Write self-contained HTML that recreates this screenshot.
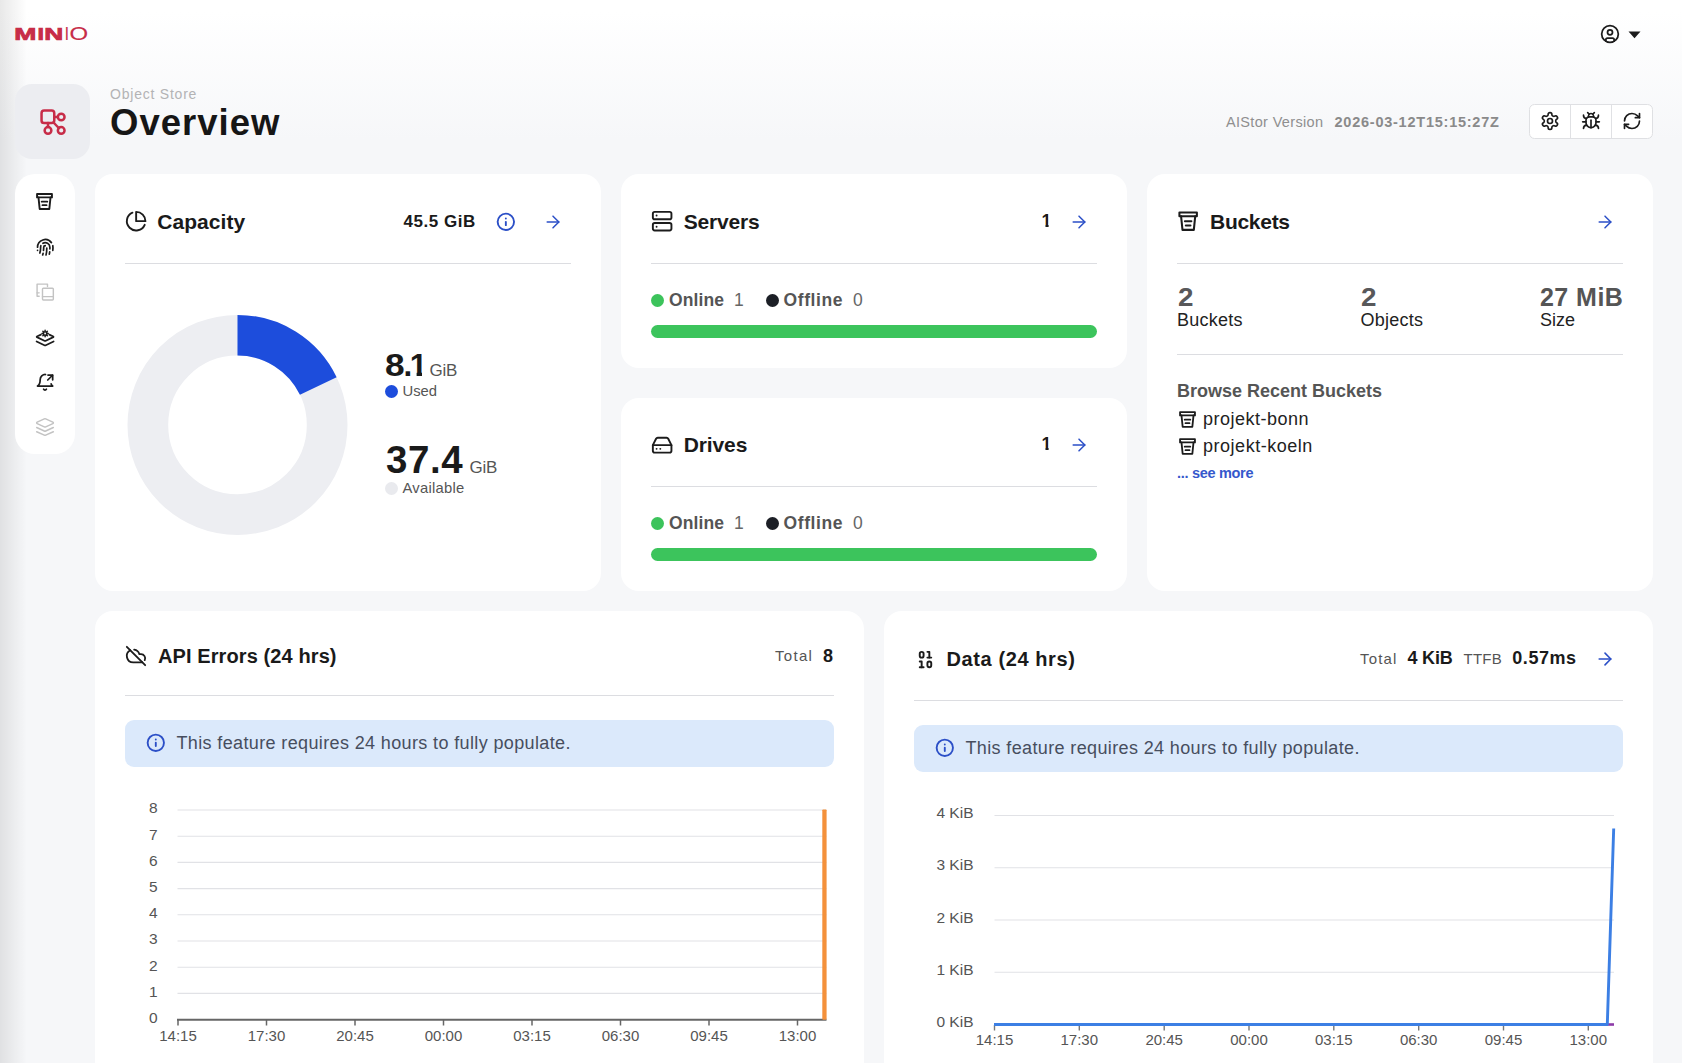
<!DOCTYPE html>
<html lang="en"><head><meta charset="utf-8"><title>AIStor Console - Overview</title>
<style>
html,body{margin:0;padding:0}
body{width:1682px;height:1063px;overflow:hidden;position:relative;font-family:"Liberation Sans",Arial,sans-serif;background:linear-gradient(180deg,#ffffff 0px,#ffffff 12px,#f6f7f9 140px,#f6f7f9 100%)}
.t{position:absolute;white-space:pre;margin:0}
.i{position:absolute;overflow:visible}
.card{position:absolute;background:#fff;border-radius:18px}
.hr{position:absolute;height:1px;background:#dcdde1}
.dot{position:absolute;border-radius:50%}
.bar{position:absolute;height:13px;border-radius:6.5px;background:#3cc45c}
.banner{position:absolute;background:#dbe9fb;border-radius:9px}
.edge{position:absolute;left:0;top:0;width:27px;height:1063px;background:linear-gradient(90deg,rgba(0,0,0,0.09) 0,rgba(0,0,0,0) 27px)}
</style></head><body>
<div class="edge"></div>
<svg class="i" style="left:0;top:0" width="120" height="60" viewBox="0 0 120 60"><text y="39.6" font-family="Liberation Sans, Arial, sans-serif" font-size="16.5" fill="#c72c48" stroke="#c72c48" stroke-linejoin="miter"><tspan x="14.3" font-weight="700" stroke-width="0.7" textLength="22.1" lengthAdjust="spacingAndGlyphs">M</tspan><tspan x="37.4" font-weight="700" stroke-width="0.7" textLength="6.5" lengthAdjust="spacingAndGlyphs">I</tspan><tspan x="44.35" font-weight="700" stroke-width="0.7" textLength="19" lengthAdjust="spacingAndGlyphs">N</tspan><tspan x="64.8" font-size="17.5" font-weight="400" stroke-width="0.15" textLength="4.2" lengthAdjust="spacingAndGlyphs">I</tspan><tspan x="69.6" font-size="17.5" font-weight="400" stroke-width="0.15" textLength="18.6" lengthAdjust="spacingAndGlyphs">O</tspan></text></svg>
<svg class="i" style="left:1600.2px;top:24.4px" width="20" height="20" viewBox="0 0 24 24" fill="none" stroke="#1c1c1c" stroke-width="2.1" stroke-linecap="round" stroke-linejoin="round" ><circle cx="12" cy="12" r="10"/><circle cx="12" cy="10" r="3"/><path d="M7 20.662V19a2 2 0 0 1 2-2h6a2 2 0 0 1 2 2v1.662"/></svg>
<svg class="i" style="left:1628.3px;top:30.6px" width="13" height="8" viewBox="0 0 13 8"><path d="M0.5 0.5h12L6.5 7.2z" fill="#1c1c1c"/></svg>
<div style="position:absolute;left:15px;top:84px;width:75px;height:75px;border-radius:17px;background:#ecedf1"></div>
<svg class="i" style="left:40px;top:109px" width="26" height="26" viewBox="0 0 26 26" fill="none" stroke="#c72c48" stroke-width="2.5" stroke-linecap="round" stroke-linejoin="round" ><rect x="1.55" y="1.55" width="12.7" height="12.5" rx="2.6"/><circle cx="21.2" cy="8" r="3.35"/><circle cx="8" cy="21.4" r="3.35"/><circle cx="21.2" cy="21.4" r="3.35"/><path d="M14.25 8h3.5"/><path d="M8 14.05v4"/><path d="m13.5 13.5 5.3 5.5"/></svg>
<div class="t" style="left:110px;top:86px;font-size:14px;line-height:16px;font-weight:400;color:#b3b3b5;letter-spacing:0.78px;">Object Store</div>
<div class="t" style="left:110px;top:102px;font-size:36.5px;line-height:41px;font-weight:700;color:#161616;letter-spacing:1px;">Overview</div>
<div class="t" style="left:1226px;top:114px;font-size:14.5px;line-height:16px;font-weight:400;color:#8f8f8f;letter-spacing:0.33px;">AIStor Version</div>
<div class="t" style="left:1334.5px;top:114px;font-size:14.5px;line-height:16px;font-weight:700;color:#8a8a8a;letter-spacing:0.76px;">2026-03-12T15:15:27Z</div>
<div style="position:absolute;left:1529px;top:104px;width:122px;height:33px;border:1px solid #dfe0e3;border-radius:5.5px;background:#fff"></div>
<div style="position:absolute;left:1570px;top:105px;width:1px;height:33px;background:#e0e1e4"></div><div style="position:absolute;left:1611px;top:105px;width:1px;height:33px;background:#e0e1e4"></div>
<svg class="i" style="left:1540px;top:111px" width="20" height="20" viewBox="0 0 24 24" fill="none" stroke="#1c1c1c" stroke-width="2" stroke-linecap="round" stroke-linejoin="round" ><path d="M12.22 2h-.44a2 2 0 0 0-2 2v.18a2 2 0 0 1-1 1.73l-.43.25a2 2 0 0 1-2 0l-.15-.08a2 2 0 0 0-2.73.73l-.22.38a2 2 0 0 0 .73 2.73l.15.1a2 2 0 0 1 1 1.72v.51a2 2 0 0 1-1 1.74l-.15.09a2 2 0 0 0-.73 2.73l.22.38a2 2 0 0 0 2.73.73l.15-.08a2 2 0 0 1 2 0l.43.25a2 2 0 0 1 1 1.73V20a2 2 0 0 0 2 2h.44a2 2 0 0 0 2-2v-.18a2 2 0 0 1 1-1.73l.43-.25a2 2 0 0 1 2 0l.15.08a2 2 0 0 0 2.73-.73l.22-.39a2 2 0 0 0-.73-2.73l-.15-.08a2 2 0 0 1-1-1.74v-.5a2 2 0 0 1 1-1.74l.15-.09a2 2 0 0 0 .73-2.73l-.22-.38a2 2 0 0 0-2.73-.73l-.15.08a2 2 0 0 1-2 0l-.43-.25a2 2 0 0 1-1-1.73V4a2 2 0 0 0-2-2z"/><circle cx="12" cy="12" r="3"/></svg>
<svg class="i" style="left:1581px;top:111px" width="20" height="20" viewBox="0 0 24 24" fill="none" stroke="#1c1c1c" stroke-width="2" stroke-linecap="round" stroke-linejoin="round" ><path d="m8 2 1.88 1.88"/><path d="M14.12 3.88 16 2"/><path d="M9 7.13v-1a3.003 3.003 0 1 1 6 0v1"/><path d="M12 20c-3.3 0-6-2.7-6-6v-3a4 4 0 0 1 4-4h4a4 4 0 0 1 4 4v3c0 3.3-2.7 6-6 6"/><path d="M12 20v-9"/><path d="M6.53 9C4.6 8.8 3 7.1 3 5"/><path d="M6 13H2"/><path d="M3 21c0-2.1 1.7-3.9 3.8-4"/><path d="M20.97 5c0 2.1-1.6 3.8-3.5 4"/><path d="M22 13h-4"/><path d="M17.2 17c2.1.1 3.8 1.9 3.8 4"/></svg>
<svg class="i" style="left:1622px;top:111px" width="20" height="20" viewBox="0 0 24 24" fill="none" stroke="#1c1c1c" stroke-width="2" stroke-linecap="round" stroke-linejoin="round" ><path d="M3 12a9 9 0 0 1 9-9 9.75 9.75 0 0 1 6.74 2.74L21 8"/><path d="M21 3v5h-5"/><path d="M21 12a9 9 0 0 1-9 9 9.75 9.75 0 0 1-6.74-2.74L3 16"/><path d="M8 16H3v5"/></svg>
<div class="card" style="left:15px;top:174px;width:60px;height:280px;border-radius:20px"></div>
<svg class="i" style="left:35.3px;top:192.1px" width="19" height="19" viewBox="0 0 24 24" fill="none" stroke="#1c1c1c" stroke-width="2.4" stroke-linecap="round" stroke-linejoin="round" ><path d="M2.6 2.6h18.8v4.2H2.6z"/><path d="M4.4 6.8 5.9 21.4h12.2l1.5-14.6"/><path d="M8.5 12.2h7"/><path d="M9.5 16.6h5"/></svg>
<svg class="i" style="left:35.5px;top:237.5px" width="18.5" height="18.5" viewBox="0 0 24 24" fill="none" stroke="#1c1c1c" stroke-width="2.2" stroke-linecap="round" stroke-linejoin="round" ><path d="M12 10a2 2 0 0 0-2 2c0 1.02-.1 2.51-.26 4"/><path d="M14 13.12c0 2.38 0 6.38-1 8.88"/><path d="M17.29 21.02c.12-.6.43-2.3.5-3.02"/><path d="M2 12a10 10 0 0 1 18-6"/><path d="M2 16h.01"/><path d="M21.8 16c.2-2 .131-5.354 0-6"/><path d="M5 19.5C5.5 18 6 15 6 12a6 6 0 0 1 .34-2"/><path d="M8.65 22c.21-.66.45-1.32.57-2"/><path d="M9 6.8a6 6 0 0 1 9 5.2v2"/></svg>
<svg class="i" style="left:35px;top:282px" width="20" height="20" viewBox="0 0 24 24" fill="none" stroke="#c3c3c3" stroke-width="1.7" stroke-linecap="round" stroke-linejoin="round" ><rect width="13" height="14" x="9" y="7.5" rx="1"/><path d="M9 17.5h13"/><path d="M5 17H2.5V2.5h12.5v3"/><path d="M2.5 13h2.5"/></svg>
<svg class="i" style="left:35px;top:326px" width="20" height="20" viewBox="0 0 20 20" fill="none" stroke="#1c1c1c" stroke-width="1.75" stroke-linecap="round" stroke-linejoin="round" ><path d="M5.9 8.6 1.9 10.45a.4.4 0 0 0 0 .7l7.5 3.65a1.6 1.6 0 0 0 1.4 0l7.5-3.65a.4.4 0 0 0 0-.7L14.3 8.6"/><path d="m1.6 15.5 7.8 3.8a1.6 1.6 0 0 0 1.4 0l7.8-3.8"/><circle cx="10.1" cy="7.5" r="1.75" stroke-width="1.7"/><path stroke-width="1.5" d="M12.5 7.5L13.25 7.5M11.8 9.2L12.33 9.73M10.1 9.9L10.1 10.65M8.4 9.2L7.87 9.73M7.7 7.5L6.95 7.5M8.4 5.8L7.87 5.27M10.1 5.1L10.1 4.35M11.8 5.8L12.33 5.27"/></svg>
<svg class="i" style="left:35px;top:372px" width="20" height="20" viewBox="0 0 24 24" fill="none" stroke="#1c1c1c" stroke-width="2.1" stroke-linecap="round" stroke-linejoin="round" ><path d="M10.3 20.6a1.94 1.94 0 0 0 3.4 0"/><path d="M12.6 3A6.2 6.2 0 0 0 6.2 9.2c0 4.8-1.3 6.6-3.2 7.6h18.2c-.8-.5-1.4-1.3-1.8-2.5"/><path d="M15.6 3.7h5.6v5.6"/><path d="m21 3.9-5.7 5.7"/></svg>
<svg class="i" style="left:35px;top:416.5px" width="20" height="20" viewBox="0 0 24 24" fill="none" stroke="#c3c3c3" stroke-width="1.8" stroke-linecap="round" stroke-linejoin="round" ><path d="m12.83 2.18a2 2 0 0 0-1.66 0L2.6 6.08a1 1 0 0 0 0 1.83l8.58 3.91a2 2 0 0 0 1.66 0l8.58-3.9a1 1 0 0 0 0-1.83Z"/><path d="m22 17.65-9.17 4.16a2 2 0 0 1-1.66 0L2 17.65"/><path d="m22 12.65-9.17 4.16a2 2 0 0 1-1.66 0L2 12.65"/></svg>
<div class="card" style="left:95px;top:174px;width:506px;height:417px"></div>
<div class="card" style="left:621px;top:174px;width:506px;height:194px"></div>
<div class="card" style="left:621px;top:398px;width:506px;height:193px"></div>
<div class="card" style="left:1147px;top:174px;width:506px;height:417px"></div>
<svg class="i" style="left:125.05px;top:210.15px" width="22.3" height="22.3" viewBox="0 0 24 24" fill="none" stroke="#1c1c1c" stroke-width="2.05" stroke-linecap="round" stroke-linejoin="round" ><path d="M21.21 15.89A10 10 0 1 1 8 2.83"/><path d="M22 12A10 10 0 0 0 12 2v10z"/></svg>
<div class="t" style="left:157.3px;top:210px;font-size:21px;line-height:23px;font-weight:700;color:#1a1a1a;letter-spacing:0.05px;">Capacity</div>
<div class="t" style="left:403.5px;top:212px;font-size:17px;line-height:19px;font-weight:700;color:#1a1a1a;letter-spacing:0.55px;">45.5 GiB</div>
<svg class="i" style="left:496.05px;top:212.05px" width="19.7" height="19.7" viewBox="0 0 24 24" fill="none" stroke="#2b4fc7" stroke-width="2.3" stroke-linecap="round" stroke-linejoin="round" ><circle cx="12" cy="12" r="10"/><path d="M12 16v-4"/><path d="M12 8h.01"/></svg>
<svg class="i" style="left:543px;top:212px" width="20" height="20" viewBox="0 0 24 24" fill="none" stroke="#2b4fc7" stroke-width="1.8" stroke-linecap="round" stroke-linejoin="round" ><path d="M5 12h14"/><path d="m12 5 7 7-7 7"/></svg>
<div class="hr" style="left:125px;top:263px;width:446px"></div>
<svg class="i" style="left:0;top:0" width="620" height="600" viewBox="0 0 620 600"><circle cx="237.5" cy="424.9" r="89.65" fill="none" stroke="#edeef2" stroke-width="40.7"/><path d="M237.5 335.25A89.65 89.65 0 0 1 318.28 386.02" fill="none" stroke="#1d4ddc" stroke-width="40.7"/></svg>
<div class="t" style="left:385.1px;top:347px;font-size:31.5px;line-height:36px;font-weight:700;color:#1a1a1a;transform:scaleX(1.12);transform-origin:0 0;">8</div>
<div class="t" style="left:403.6px;top:347px;font-size:31.5px;line-height:36px;font-weight:700;color:#1a1a1a;">.</div>
<div class="t" style="left:409.8px;top:347px;font-size:31.5px;line-height:36px;font-weight:700;color:#1a1a1a;clip-path:polygon(0 0,12.2px 0,12.2px 40px,6.8px 40px,6.8px 25px,0 25px);">1</div>
<div class="t" style="left:429.5px;top:361px;font-size:17px;line-height:19px;font-weight:400;color:#555;letter-spacing:-0.3px;">GiB</div>
<div class="dot" style="left:385px;top:384.5px;width:13px;height:13px;background:#1d4ddc"></div>
<div class="t" style="left:402.5px;top:383px;font-size:14.8px;line-height:16px;font-weight:400;color:#555;">Used</div>
<div class="t" style="left:386px;top:438px;font-size:38.5px;line-height:43px;font-weight:700;color:#1a1a1a;letter-spacing:0.55px;">37.4</div>
<div class="t" style="left:469.5px;top:458px;font-size:17px;line-height:19px;font-weight:400;color:#555;letter-spacing:-0.3px;">GiB</div>
<div class="dot" style="left:385px;top:482px;width:13px;height:13px;background:#e9eaee"></div>
<div class="t" style="left:402.5px;top:480px;font-size:14.8px;line-height:16px;font-weight:400;color:#555;letter-spacing:0.25px;">Available</div>
<svg class="i" style="left:651.05px;top:210.2px" width="22.3" height="22.3" viewBox="0 0 24 24" fill="none" stroke="#1c1c1c" stroke-width="2.05" stroke-linecap="round" stroke-linejoin="round" ><rect width="20" height="8" x="2" y="2" rx="2" ry="2"/><rect width="20" height="8" x="2" y="14" rx="2" ry="2"/><path d="M6 6h.01"/><path d="M6 18h.01"/></svg>
<div class="t" style="left:683.8px;top:210px;font-size:21px;line-height:23px;font-weight:700;color:#1a1a1a;letter-spacing:-0.2px;">Servers</div>
<div class="t" style="left:1041.6px;top:211px;font-size:18px;line-height:20px;font-weight:700;color:#1a1a1a;clip-path:polygon(0 0,7px 0,7px 24px,3.9px 24px,3.9px 14px,0 14px);">1</div>
<svg class="i" style="left:1069px;top:212px" width="20" height="20" viewBox="0 0 24 24" fill="none" stroke="#2b4fc7" stroke-width="1.8" stroke-linecap="round" stroke-linejoin="round" ><path d="M5 12h14"/><path d="m12 5 7 7-7 7"/></svg>
<div class="hr" style="left:651px;top:263px;width:446px"></div>
<div class="dot" style="left:651px;top:294px;width:13px;height:13px;background:#3cc35b"></div>
<div class="t" style="left:669px;top:290px;font-size:17.5px;line-height:20px;font-weight:700;color:#555;letter-spacing:0.1px;">Online</div>
<div class="t" style="left:734px;top:290px;font-size:17.5px;line-height:20px;font-weight:400;color:#666;">1</div>
<div class="dot" style="left:765.5px;top:294px;width:13px;height:13px;background:#1c1f26"></div>
<div class="t" style="left:783.5px;top:290px;font-size:17.5px;line-height:20px;font-weight:700;color:#555;letter-spacing:0.6px;">Offline</div>
<div class="t" style="left:853px;top:290px;font-size:17.5px;line-height:20px;font-weight:400;color:#666;">0</div>
<div class="bar" style="left:651px;top:325px;width:446px"></div>
<svg class="i" style="left:651.05px;top:433.5px" width="22.3" height="22.3" viewBox="0 0 24 24" fill="none" stroke="#1c1c1c" stroke-width="2.05" stroke-linecap="round" stroke-linejoin="round" ><path d="M22 12H2"/><path d="M5.45 5.11 2 12v6a2 2 0 0 0 2 2h16a2 2 0 0 0 2-2v-6l-3.45-6.89A2 2 0 0 0 16.76 4H7.24a2 2 0 0 0-1.79 1.11z"/><path d="M6 16h.01"/><path d="M10 16h.01"/></svg>
<div class="t" style="left:683.8px;top:433px;font-size:21px;line-height:23px;font-weight:700;color:#1a1a1a;letter-spacing:-0.14px;">Drives</div>
<div class="t" style="left:1041.6px;top:434px;font-size:18px;line-height:20px;font-weight:700;color:#1a1a1a;clip-path:polygon(0 0,7px 0,7px 24px,3.9px 24px,3.9px 14px,0 14px);">1</div>
<svg class="i" style="left:1069px;top:435px" width="20" height="20" viewBox="0 0 24 24" fill="none" stroke="#2b4fc7" stroke-width="1.8" stroke-linecap="round" stroke-linejoin="round" ><path d="M5 12h14"/><path d="m12 5 7 7-7 7"/></svg>
<div class="hr" style="left:651px;top:486px;width:446px"></div>
<div class="dot" style="left:651px;top:517px;width:13px;height:13px;background:#3cc35b"></div>
<div class="t" style="left:669px;top:513px;font-size:17.5px;line-height:20px;font-weight:700;color:#555;letter-spacing:0.1px;">Online</div>
<div class="t" style="left:734px;top:513px;font-size:17.5px;line-height:20px;font-weight:400;color:#666;">1</div>
<div class="dot" style="left:765.5px;top:517px;width:13px;height:13px;background:#1c1f26"></div>
<div class="t" style="left:783.5px;top:513px;font-size:17.5px;line-height:20px;font-weight:700;color:#555;letter-spacing:0.6px;">Offline</div>
<div class="t" style="left:853px;top:513px;font-size:17.5px;line-height:20px;font-weight:400;color:#666;">0</div>
<div class="bar" style="left:651px;top:548px;width:446px"></div>
<svg class="i" style="left:1176.8px;top:210.3px" width="22.3" height="22.3" viewBox="0 0 24 24" fill="none" stroke="#1c1c1c" stroke-width="2.2" stroke-linecap="round" stroke-linejoin="round" ><path d="M2.6 2.6h18.8v4.2H2.6z"/><path d="M4.4 6.8 5.9 21.4h12.2l1.5-14.6"/><path d="M8.5 12.2h7"/><path d="M9.5 16.6h5"/></svg>
<div class="t" style="left:1210px;top:210px;font-size:21px;line-height:23px;font-weight:700;color:#1a1a1a;letter-spacing:-0.28px;">Buckets</div>
<svg class="i" style="left:1595px;top:212px" width="20" height="20" viewBox="0 0 24 24" fill="none" stroke="#2b4fc7" stroke-width="1.8" stroke-linecap="round" stroke-linejoin="round" ><path d="M5 12h14"/><path d="m12 5 7 7-7 7"/></svg>
<div class="hr" style="left:1177px;top:263px;width:446px"></div>
<div class="t" style="left:1177.6px;top:283px;font-size:25.5px;line-height:28px;font-weight:700;color:#58585a;transform:scaleX(1.09);transform-origin:0 0;">2</div>
<div class="t" style="left:1177px;top:310px;font-size:18px;line-height:20px;font-weight:400;color:#222;letter-spacing:0.25px;">Buckets</div>
<div class="t" style="left:1360.6px;top:283px;font-size:25.5px;line-height:28px;font-weight:700;color:#58585a;transform:scaleX(1.09);transform-origin:0 0;">2</div>
<div class="t" style="left:1360.5px;top:310px;font-size:18px;line-height:20px;font-weight:400;color:#222;letter-spacing:0.25px;">Objects</div>
<div class="t" style="left:1540px;top:283px;font-size:25px;line-height:28px;font-weight:700;color:#555;letter-spacing:0.45px;">27 MiB</div>
<div class="t" style="left:1540px;top:310px;font-size:18px;line-height:20px;font-weight:400;color:#222;">Size</div>
<div class="hr" style="left:1177px;top:354px;width:446px"></div>
<div class="t" style="left:1177px;top:381px;font-size:18px;line-height:20px;font-weight:700;color:#555;">Browse Recent Buckets</div>
<svg class="i" style="left:1178px;top:410px" width="19" height="19" viewBox="0 0 24 24" fill="none" stroke="#1c1c1c" stroke-width="2.3" stroke-linecap="round" stroke-linejoin="round" ><path d="M2.6 2.6h18.8v4.2H2.6z"/><path d="M4.4 6.8 5.9 21.4h12.2l1.5-14.6"/><path d="M8.5 12.2h7"/><path d="M9.5 16.6h5"/></svg>
<div class="t" style="left:1203px;top:409px;font-size:18px;line-height:20px;font-weight:400;color:#222;letter-spacing:0.5px;">projekt-bonn</div>
<svg class="i" style="left:1178px;top:437px" width="19" height="19" viewBox="0 0 24 24" fill="none" stroke="#1c1c1c" stroke-width="2.3" stroke-linecap="round" stroke-linejoin="round" ><path d="M2.6 2.6h18.8v4.2H2.6z"/><path d="M4.4 6.8 5.9 21.4h12.2l1.5-14.6"/><path d="M8.5 12.2h7"/><path d="M9.5 16.6h5"/></svg>
<div class="t" style="left:1203px;top:436px;font-size:18px;line-height:20px;font-weight:400;color:#222;letter-spacing:0.52px;">projekt-koeln</div>
<div class="t" style="left:1177px;top:465px;font-size:14.5px;line-height:16px;font-weight:700;color:#3558cc;letter-spacing:-0.3px;">... see more</div>
<div class="card" style="left:95px;top:611px;width:769px;height:480px"></div>
<div class="card" style="left:884px;top:611px;width:769px;height:480px"></div>
<svg class="i" style="left:125px;top:645px" width="22" height="22" viewBox="0 0 24 24" fill="none" stroke="#1c1c1c" stroke-width="2" stroke-linecap="round" stroke-linejoin="round" ><path d="m2 2 20 20"/><path d="M5.782 5.782A7 7 0 0 0 9 19h8.5a4.5 4.5 0 0 0 1.307-.193"/><path d="M21.532 16.5A4.5 4.5 0 0 0 17.5 10h-1.79A7.008 7.008 0 0 0 10 5.07"/></svg>
<div class="t" style="left:158px;top:645px;font-size:20px;line-height:22px;font-weight:700;color:#1a1a1a;letter-spacing:0.1px;">API Errors (24 hrs)</div>
<div class="t" style="left:775px;top:647px;font-size:15px;line-height:17px;font-weight:400;color:#555;letter-spacing:1.3px;">Total</div>
<div class="t" style="left:823px;top:646px;font-size:18px;line-height:20px;font-weight:700;color:#1a1a1a;">8</div>
<div class="hr" style="left:125px;top:695px;width:709px"></div>
<div class="banner" style="left:125px;top:720px;width:709px;height:47px"></div>
<svg class="i" style="left:146px;top:732.7px" width="19.6" height="19.6" viewBox="0 0 24 24" fill="none" stroke="#2b4fc7" stroke-width="2.3" stroke-linecap="round" stroke-linejoin="round" ><circle cx="12" cy="12" r="10"/><path d="M12 16v-4"/><path d="M12 8h.01"/></svg>
<div class="t" style="left:176.5px;top:733px;font-size:18px;line-height:20px;font-weight:400;color:#474e5e;letter-spacing:0.37px;">This feature requires 24 hours to fully populate.</div>
<svg class="i" style="left:0;top:780px" width="880" height="283" viewBox="0 780 880 283" font-family="Liberation Sans, Arial, sans-serif" font-size="15.5" fill="#555"><text x="153.3" y="1022.9" text-anchor="middle">0</text><line x1="177.5" x2="826.5" y1="993.4" y2="993.4" stroke="#e1e2e6" stroke-width="1.1"/><text x="153.3" y="996.7" text-anchor="middle">1</text><line x1="177.5" x2="826.5" y1="967.2" y2="967.2" stroke="#e1e2e6" stroke-width="1.1"/><text x="153.3" y="970.5" text-anchor="middle">2</text><line x1="177.5" x2="826.5" y1="941" y2="941" stroke="#e1e2e6" stroke-width="1.1"/><text x="153.3" y="944.3" text-anchor="middle">3</text><line x1="177.5" x2="826.5" y1="914.8" y2="914.8" stroke="#e1e2e6" stroke-width="1.1"/><text x="153.3" y="918.1" text-anchor="middle">4</text><line x1="177.5" x2="826.5" y1="888.6" y2="888.6" stroke="#e1e2e6" stroke-width="1.1"/><text x="153.3" y="891.9" text-anchor="middle">5</text><line x1="177.5" x2="826.5" y1="862.4" y2="862.4" stroke="#e1e2e6" stroke-width="1.1"/><text x="153.3" y="865.7" text-anchor="middle">6</text><line x1="177.5" x2="826.5" y1="836.2" y2="836.2" stroke="#e1e2e6" stroke-width="1.1"/><text x="153.3" y="839.5" text-anchor="middle">7</text><line x1="177.5" x2="826.5" y1="810" y2="810" stroke="#e1e2e6" stroke-width="1.1"/><text x="153.3" y="813.3" text-anchor="middle">8</text><line x1="177" x2="826.5" y1="1019.8" y2="1019.8" stroke="#666" stroke-width="2"/><line x1="178" x2="178" y1="1019.8" y2="1025.5" stroke="#666" stroke-width="1.5"/><text x="178" y="1040.8" font-size="15" text-anchor="middle">14:15</text><line x1="266.5" x2="266.5" y1="1019.8" y2="1025.5" stroke="#666" stroke-width="1.5"/><text x="266.5" y="1040.8" font-size="15" text-anchor="middle">17:30</text><line x1="355" x2="355" y1="1019.8" y2="1025.5" stroke="#666" stroke-width="1.5"/><text x="355" y="1040.8" font-size="15" text-anchor="middle">20:45</text><line x1="443.5" x2="443.5" y1="1019.8" y2="1025.5" stroke="#666" stroke-width="1.5"/><text x="443.5" y="1040.8" font-size="15" text-anchor="middle">00:00</text><line x1="532" x2="532" y1="1019.8" y2="1025.5" stroke="#666" stroke-width="1.5"/><text x="532" y="1040.8" font-size="15" text-anchor="middle">03:15</text><line x1="620.5" x2="620.5" y1="1019.8" y2="1025.5" stroke="#666" stroke-width="1.5"/><text x="620.5" y="1040.8" font-size="15" text-anchor="middle">06:30</text><line x1="709" x2="709" y1="1019.8" y2="1025.5" stroke="#666" stroke-width="1.5"/><text x="709" y="1040.8" font-size="15" text-anchor="middle">09:45</text><line x1="797.5" x2="797.5" y1="1019.8" y2="1025.5" stroke="#666" stroke-width="1.5"/><text x="797.5" y="1040.8" font-size="15" text-anchor="middle">13:00</text><rect x="822.3" y="809.5" width="4.3" height="210.3" rx="0.8" fill="#f4913b"/></svg>
<svg class="i" style="left:913.5px;top:647.5px" width="23" height="23" viewBox="0 0 24 24" fill="none" stroke="#1c1c1c" stroke-width="2" stroke-linecap="round" stroke-linejoin="round" ><rect x="14" y="14" width="4" height="6" rx="2"/><rect x="6" y="4" width="4" height="6" rx="2"/><path d="M6 20h4"/><path d="M14 10h4"/><path d="M6 14h2v6"/><path d="M14 4h2v6"/></svg>
<div class="t" style="left:946.5px;top:648px;font-size:20px;line-height:22px;font-weight:700;color:#1a1a1a;letter-spacing:0.6px;">Data (24 hrs)</div>
<div class="t" style="left:1360px;top:650px;font-size:15px;line-height:17px;font-weight:400;color:#555;letter-spacing:1.15px;">Total</div>
<div class="t" style="left:1407.5px;top:648px;font-size:18px;line-height:20px;font-weight:700;color:#1a1a1a;letter-spacing:-0.2px;">4 KiB</div>
<div class="t" style="left:1463.5px;top:650px;font-size:15px;line-height:17px;font-weight:400;color:#555;letter-spacing:0.27px;">TTFB</div>
<div class="t" style="left:1512.3px;top:648px;font-size:18px;line-height:20px;font-weight:700;color:#1a1a1a;letter-spacing:0.55px;">0.57ms</div>
<svg class="i" style="left:1594.7px;top:648.7px" width="20" height="20" viewBox="0 0 24 24" fill="none" stroke="#2b4fc7" stroke-width="1.9" stroke-linecap="round" stroke-linejoin="round" ><path d="M5 12h14"/><path d="m12 5 7 7-7 7"/></svg>
<div class="hr" style="left:914px;top:700px;width:709px"></div>
<div class="banner" style="left:914px;top:725px;width:709px;height:47px"></div>
<svg class="i" style="left:935.1px;top:737.7px" width="19.6" height="19.6" viewBox="0 0 24 24" fill="none" stroke="#2b4fc7" stroke-width="2.3" stroke-linecap="round" stroke-linejoin="round" ><circle cx="12" cy="12" r="10"/><path d="M12 16v-4"/><path d="M12 8h.01"/></svg>
<div class="t" style="left:965.5px;top:738px;font-size:18px;line-height:20px;font-weight:400;color:#474e5e;letter-spacing:0.37px;">This feature requires 24 hours to fully populate.</div>
<svg class="i" style="left:884px;top:780px" width="798" height="283" viewBox="884 780 798 283" font-family="Liberation Sans, Arial, sans-serif" font-size="15.5" fill="#555"><text x="973.5" y="1027.1" text-anchor="end">0 KiB</text><line x1="994.5" x2="1614" y1="972.25" y2="972.25" stroke="#e1e2e6" stroke-width="1.1"/><text x="973.5" y="974.85" text-anchor="end">1 KiB</text><line x1="994.5" x2="1614" y1="920" y2="920" stroke="#e1e2e6" stroke-width="1.1"/><text x="973.5" y="922.6" text-anchor="end">2 KiB</text><line x1="994.5" x2="1614" y1="867.75" y2="867.75" stroke="#e1e2e6" stroke-width="1.1"/><text x="973.5" y="870.35" text-anchor="end">3 KiB</text><line x1="994.5" x2="1614" y1="815.5" y2="815.5" stroke="#e1e2e6" stroke-width="1.1"/><text x="973.5" y="818.1" text-anchor="end">4 KiB</text><line x1="994.5" x2="994.5" y1="1025" y2="1030.5" stroke="#777" stroke-width="1.4"/><text x="994.5" y="1045.3" font-size="15" text-anchor="middle">14:15</text><line x1="1079.3" x2="1079.3" y1="1025" y2="1030.5" stroke="#777" stroke-width="1.4"/><text x="1079.3" y="1045.3" font-size="15" text-anchor="middle">17:30</text><line x1="1164.2" x2="1164.2" y1="1025" y2="1030.5" stroke="#777" stroke-width="1.4"/><text x="1164.2" y="1045.3" font-size="15" text-anchor="middle">20:45</text><line x1="1249" x2="1249" y1="1025" y2="1030.5" stroke="#777" stroke-width="1.4"/><text x="1249" y="1045.3" font-size="15" text-anchor="middle">00:00</text><line x1="1333.8" x2="1333.8" y1="1025" y2="1030.5" stroke="#777" stroke-width="1.4"/><text x="1333.8" y="1045.3" font-size="15" text-anchor="middle">03:15</text><line x1="1418.7" x2="1418.7" y1="1025" y2="1030.5" stroke="#777" stroke-width="1.4"/><text x="1418.7" y="1045.3" font-size="15" text-anchor="middle">06:30</text><line x1="1503.5" x2="1503.5" y1="1025" y2="1030.5" stroke="#777" stroke-width="1.4"/><text x="1503.5" y="1045.3" font-size="15" text-anchor="middle">09:45</text><line x1="1588.3" x2="1588.3" y1="1025" y2="1030.5" stroke="#777" stroke-width="1.4"/><text x="1588.3" y="1045.3" font-size="15" text-anchor="middle">13:00</text><line x1="1607" x2="1614" y1="1024.5" y2="1024.5" stroke="#8d3aa8" stroke-width="2.6"/><polyline points="994,1024.5 1607.3,1024.5 1613.7,828.5" fill="none" stroke="#3c7fe4" stroke-width="2.9" stroke-linejoin="round"/></svg>
</body></html>
